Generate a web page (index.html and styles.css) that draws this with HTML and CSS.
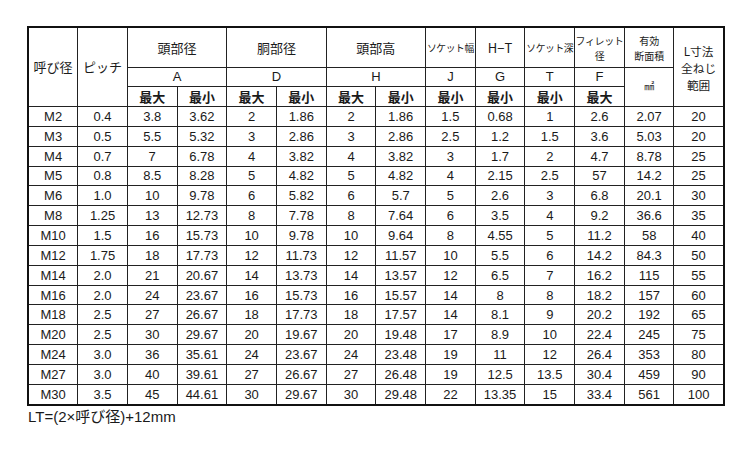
FILE: index.html
```html
<!DOCTYPE html>
<html lang="ja">
<head>
<meta charset="utf-8">
<title>寸法表</title>
<link rel="stylesheet" href="styles.css">
</head>
<body>
<div class="page">
<table class="spec">
<colgroup>
<col><col><col><col><col><col><col><col><col><col><col><col><col><col>
</colgroup>
<thead>
<tr class="h1">
<th rowspan="3">呼び径</th>
<th rowspan="3">ピッチ</th>
<th colspan="2">頭部径</th>
<th colspan="2">胴部径</th>
<th colspan="2">頭部高</th>
<th class="tiny">ソケット幅</th>
<th>H−T</th>
<th class="tiny">ソケット深</th>
<th class="small">フィレット<br>径</th>
<th class="small2">有効<br>断面積</th>
<th rowspan="3" class="lcol"><span class="ln">L寸法</span><span class="ln">全ねじ</span><span class="ln">範囲</span></th>
</tr>
<tr class="h2">
<th colspan="2">A</th>
<th colspan="2">D</th>
<th colspan="2">H</th>
<th>J</th>
<th>G</th>
<th>T</th>
<th>F</th>
<th rowspan="2" class="unit">㎟</th>
</tr>
<tr class="h3">
<th>最大</th><th>最小</th>
<th>最大</th><th>最小</th>
<th>最大</th><th>最小</th>
<th>最小</th>
<th>最小</th>
<th>最小</th>
<th>最大</th>
</tr>
</thead>
<tbody>
<tr><td>M2</td><td>0.4</td><td>3.8</td><td>3.62</td><td>2</td><td>1.86</td><td>2</td><td>1.86</td><td>1.5</td><td>0.68</td><td>1</td><td>2.6</td><td>2.07</td><td>20</td></tr>
<tr><td>M3</td><td>0.5</td><td>5.5</td><td>5.32</td><td>3</td><td>2.86</td><td>3</td><td>2.86</td><td>2.5</td><td>1.2</td><td>1.5</td><td>3.6</td><td>5.03</td><td>20</td></tr>
<tr><td>M4</td><td>0.7</td><td>7</td><td>6.78</td><td>4</td><td>3.82</td><td>4</td><td>3.82</td><td>3</td><td>1.7</td><td>2</td><td>4.7</td><td>8.78</td><td>25</td></tr>
<tr><td>M5</td><td>0.8</td><td>8.5</td><td>8.28</td><td>5</td><td>4.82</td><td>5</td><td>4.82</td><td>4</td><td>2.15</td><td>2.5</td><td>57</td><td>14.2</td><td>25</td></tr>
<tr><td>M6</td><td>1.0</td><td>10</td><td>9.78</td><td>6</td><td>5.82</td><td>6</td><td>5.7</td><td>5</td><td>2.6</td><td>3</td><td>6.8</td><td>20.1</td><td>30</td></tr>
<tr><td>M8</td><td>1.25</td><td>13</td><td>12.73</td><td>8</td><td>7.78</td><td>8</td><td>7.64</td><td>6</td><td>3.5</td><td>4</td><td>9.2</td><td>36.6</td><td>35</td></tr>
<tr><td>M10</td><td>1.5</td><td>16</td><td>15.73</td><td>10</td><td>9.78</td><td>10</td><td>9.64</td><td>8</td><td>4.55</td><td>5</td><td>11.2</td><td>58</td><td>40</td></tr>
<tr><td>M12</td><td>1.75</td><td>18</td><td>17.73</td><td>12</td><td>11.73</td><td>12</td><td>11.57</td><td>10</td><td>5.5</td><td>6</td><td>14.2</td><td>84.3</td><td>50</td></tr>
<tr><td>M14</td><td>2.0</td><td>21</td><td>20.67</td><td>14</td><td>13.73</td><td>14</td><td>13.57</td><td>12</td><td>6.5</td><td>7</td><td>16.2</td><td>115</td><td>55</td></tr>
<tr><td>M16</td><td>2.0</td><td>24</td><td>23.67</td><td>16</td><td>15.73</td><td>16</td><td>15.57</td><td>14</td><td>8</td><td>8</td><td>18.2</td><td>157</td><td>60</td></tr>
<tr><td>M18</td><td>2.5</td><td>27</td><td>26.67</td><td>18</td><td>17.73</td><td>18</td><td>17.57</td><td>14</td><td>8.1</td><td>9</td><td>20.2</td><td>192</td><td>65</td></tr>
<tr><td>M20</td><td>2.5</td><td>30</td><td>29.67</td><td>20</td><td>19.67</td><td>20</td><td>19.48</td><td>17</td><td>8.9</td><td>10</td><td>22.4</td><td>245</td><td>75</td></tr>
<tr><td>M24</td><td>3.0</td><td>36</td><td>35.61</td><td>24</td><td>23.67</td><td>24</td><td>23.48</td><td>19</td><td>11</td><td>12</td><td>26.4</td><td>353</td><td>80</td></tr>
<tr><td>M27</td><td>3.0</td><td>40</td><td>39.61</td><td>27</td><td>26.67</td><td>27</td><td>26.48</td><td>19</td><td>12.5</td><td>13.5</td><td>30.4</td><td>459</td><td>90</td></tr>
<tr><td>M30</td><td>3.5</td><td>45</td><td>44.61</td><td>30</td><td>29.67</td><td>30</td><td>29.48</td><td>22</td><td>13.35</td><td>15</td><td>33.4</td><td>561</td><td>100</td></tr>
</tbody>
</table>
<p class="note">LT=(2×呼び径)+12mm</p>
</div>
</body>
</html>
```
FILE: styles.css
```css
html, body {
  margin: 0;
  padding: 0;
  background: #ffffff;
}

body {
  font-family: "Liberation Sans", "Noto Sans CJK JP", sans-serif;
  color: #1a1a1a;
}

.page {
  padding: 26px 0 0 27px;
}

.spec {
  border-collapse: collapse;
  table-layout: fixed;
  width: 697px;
  border: 2px solid #111;
}

.spec col {
  width: 49.7px;
}

.spec th,
.spec td {
  border: 1px solid #222;
  padding: 0;
  text-align: center;
  vertical-align: middle;
  overflow: hidden;
  white-space: nowrap;
}

.spec th {
  font-family: "Noto Sans CJK JP", "Liberation Sans", sans-serif;
  font-weight: 400;
  font-size: 13px;
  line-height: 16px;
}

.spec .h1 th {
  height: 39px;
}

.spec .h2 th {
  height: 18px;
  font-family: "Liberation Sans", "Noto Sans CJK JP", sans-serif;
  font-size: 13px;
}

.spec .h3 th {
  height: 19px;
  font-weight: 700;
  font-size: 13px;
}

.spec th.tiny {
  font-size: 9.8px;
  letter-spacing: -0.4px;
}

.spec th.small {
  font-size: 10px;
  line-height: 15px;
  letter-spacing: -0.4px;
}

.spec th.small2 {
  font-size: 10px;
  line-height: 15px;
}

.spec th.lcol {
  font-size: 11.7px;
  line-height: 17px;
}

.spec th.lcol .ln {
  display: block;
  height: 17px;
  line-height: 17px;
}

.spec th.unit {
  font-size: 10px;
}

.spec td {
  height: 18.85px;
  font-size: 13px;
  line-height: 15px;
}

.spec tbody td:nth-child(4),
.spec tbody td:nth-child(6),
.spec tbody td:nth-child(8),
.spec tbody td:nth-child(13) {
  border-left-color: #8a8a8a;
}

.note {
  margin: 0;
  padding: 2px 0 0 1px;
  font-family: "Liberation Sans", "Noto Sans CJK JP", sans-serif;
  font-size: 15px;
  line-height: 17px;
  color: #1a1a1a;
}
```
